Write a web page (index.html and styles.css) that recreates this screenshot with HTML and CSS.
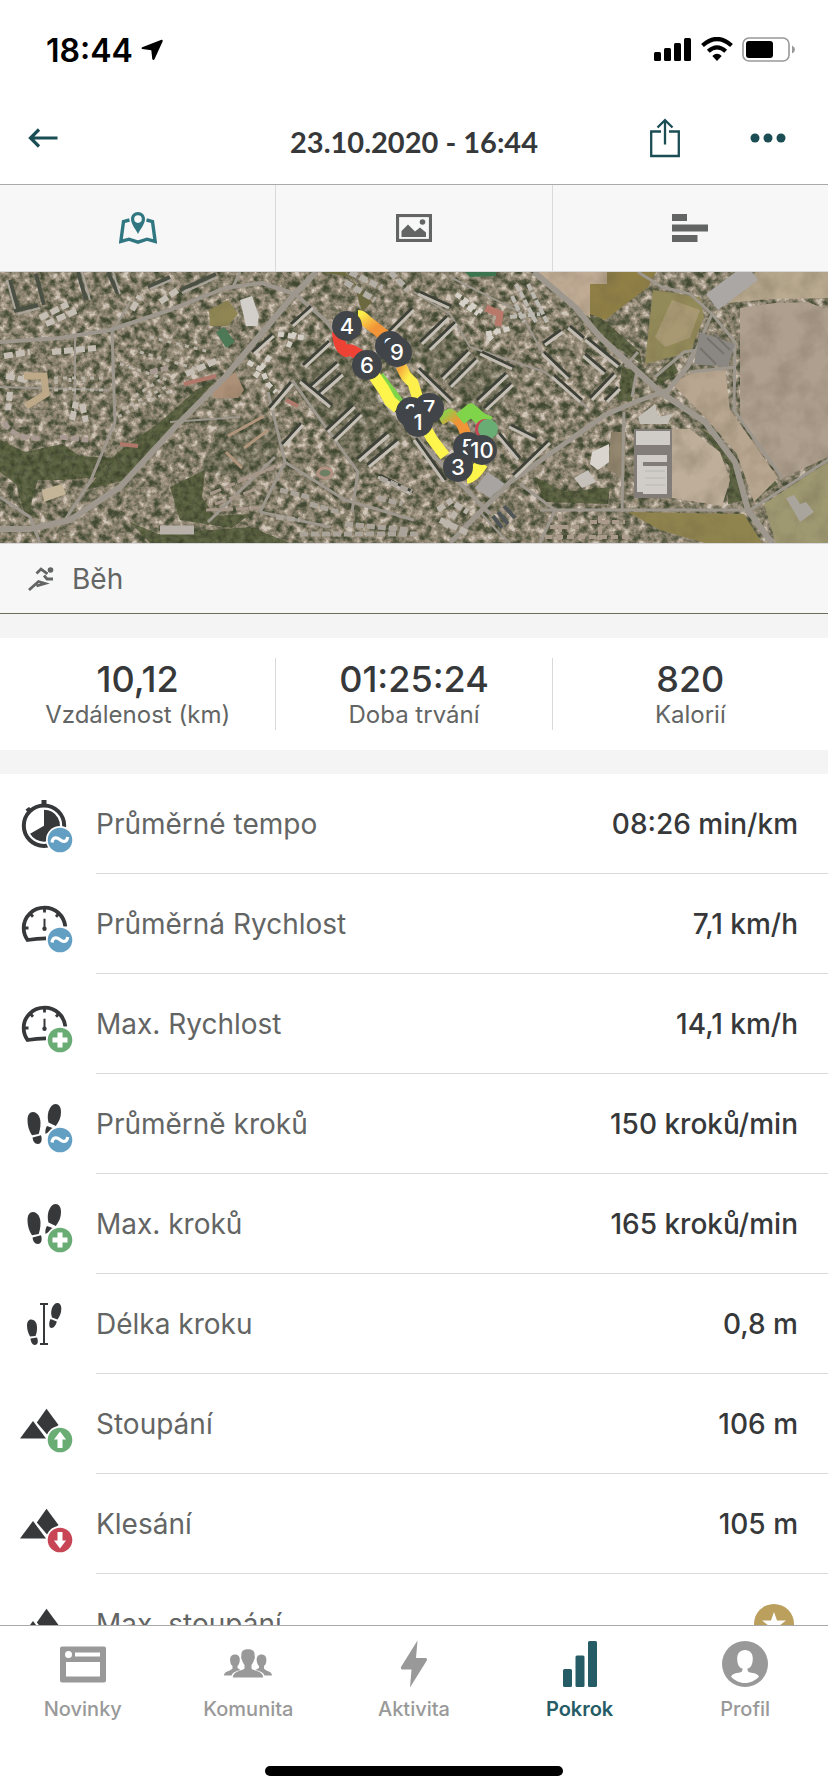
FILE: index.html
```html
<!DOCTYPE html>
<html lang="cs">
<head>
    <meta charset="utf-8" />
    <meta name="viewport" content="width=device-width, initial-scale=1">
    <title>Pokrok</title>
    <link rel="stylesheet" href="styles.css">
</head>
<body>
    <!-- shared icon parts -->
    <svg class="sprite" aria-hidden="true">
        <symbol id="badge-avg" viewBox="0 0 96 100">
            <circle cx="60" cy="66" r="14" fill="#fff" />
            <circle cx="60" cy="66" r="12.3" fill="#639fc3" />
            <path d="M52 68.5C52.500 63.500 56 62.500 59.800 65.500C63.500 68.500 67 68 67.700 63" fill="none" stroke="#fff" stroke-width="3.200" />
        </symbol>
        <symbol id="badge-max" viewBox="0 0 96 100">
            <circle cx="60" cy="66" r="14" fill="#fff" />
            <circle cx="60" cy="66" r="12.3" fill="#69ad75" />
            <path d="M60 58.500V73.500M52.500 66H67.500" stroke="#fff" stroke-width="5" />
        </symbol>
        <symbol id="badge-up" viewBox="0 0 96 100">
            <circle cx="60" cy="66" r="14" fill="#fff" />
            <circle cx="60" cy="66" r="12.3" fill="#69ad75" />
            <path d="M60 57.500L66 65.500H62.500V74H57.500V65.500H54Z" fill="#fff" />
        </symbol>
        <symbol id="badge-down" viewBox="0 0 96 100">
            <circle cx="60" cy="66" r="14" fill="#fff" />
            <circle cx="60" cy="66" r="12.3" fill="#c74554" />
            <path d="M60 74.500L66 66.500H62.500V58H57.500V66.500H54Z" fill="#fff" />
        </symbol>
        <symbol id="gauge" viewBox="0 0 96 100">
            <path d="M46 64.300C39 64.300 33 65 27.600 66C25 62.500 23.700 58.500 23.700 54C23.700 42.500 33 33.700 44.500 33.700C55.500 33.700 64 41.500 65.300 52.500" fill="none" stroke="#36383a" stroke-width="3.800" />
            <path d="M44.500 34V38.500M24 54H28.500M30.500 40L33 42.800M58.500 40L56 42.800" stroke="#36383a" stroke-width="2.800" />
            <path d="M44.500 44.700V54" stroke="#36383a" stroke-width="2" />
            <circle cx="44.500" cy="54.700" r="2.200" fill="#36383a" />
        </symbol>
        <symbol id="steps" viewBox="0 0 96 100">
            <path d="M33 38C37.500 38 40.500 43 40.500 49C40.500 53 39.700 57 38.700 60L32 61.300C29 57 27.500 52 27.500 46C27.500 41 29.500 38 33 38Z" fill="#36383a" />
            <path d="M32.600 63.500L41 61.300C42.500 65.500 41.500 70 37.800 70C34.500 70 32.800 67 32.600 63.500Z" fill="#36383a" />
            <path d="M55.500 30C59 30 61 33 61 38.500C61 43 59 48 55.800 52L48.500 48.500C47.500 45 47.500 41 48.500 37.500C50 33 52.500 30 55.500 30Z" fill="#36383a" />
            <path d="M47 52L54 54.500L45.500 60C45 57 45.500 54 47 52Z" fill="#36383a" />
        </symbol>
        <symbol id="mountain" viewBox="0 0 96 100">
            <path d="M46.500 34.700L58.500 51L47.500 61L36.800 48.500Z" fill="#36383a" />
            <path d="M33 47L46 64.500H20Z" fill="#36383a" />
        </symbol>
    </svg>

    <div class="screen">
        <header class="header">
            <div class="status">
                <div class="status-left">
                    <span class="clock">18:44</span>
                    <svg width="22" height="22" viewBox="0 0 22 22"><path d="M20.500 .8L1.200 8.200Q-.3 9.200 1.300 10L10.300 11.200L11.300 20.200Q12.500 21.800 13.500 20.200L21.700 2.200Q21.800 .5 20.500 .8Z" /></svg>
                </div>
                <div class="status-right">
                    <svg width="38" height="26" viewBox="0 0 38 26">
                        <rect x="0" y="15" width="7" height="9" rx="1.500" />
                        <rect x="10" y="11" width="7" height="13" rx="1.500" />
                        <rect x="20" y="6" width="7" height="18" rx="1.500" />
                        <rect x="30" y="1" width="7" height="23" rx="1.500" />
                    </svg>
                    <svg width="32" height="26" viewBox="0 0 32 26">
                        <path d="M1.500 8.500Q16-4.500 30.500 8.500M7.300 14.300Q16 6.500 24.700 14.300" fill="none" stroke="#000" stroke-width="4.200" />
                        <path d="M11.300 19Q16 14.500 20.700 19L16 24Z" />
                    </svg>
                    <svg width="54" height="26" viewBox="0 0 54 26">
                        <rect x="1" y="1" width="46" height="23" rx="6" fill="none" stroke="#999" stroke-width="1.600" />
                        <rect x="4" y="4" width="27" height="17" rx="3" />
                        <path d="M50 8.500Q53 10 53 12.500Q53 15 50 16.500Z" fill="#999" />
                    </svg>
                </div>
            </div>
            <div class="toolbar">
                <div class="toolbar-side">
                    <button type="button" class="icon-btn" aria-label="Zpět">
                        <svg width="30" height="20" viewBox="0 0 30 20"><path d="M29.500 10H2M11 1.500L2.500 10L11 18.500" fill="none" stroke="#1b4d55" stroke-width="3.200" /></svg>
                    </button>
                </div>
                <h1 class="toolbar-title">23.10.2020 - 16:44</h1>
                <div class="toolbar-side toolbar-right">
                    <button type="button" class="icon-btn" aria-label="Sdílet">
                        <svg width="30" height="40" viewBox="0 0 30 40"><path d="M11 13.500H1.200V38H28.800V13.500H19M15 26.500V3M7.500 9.500L15 2.200L22.500 9.500" fill="none" stroke="#1b4d55" stroke-width="2.300" /></svg>
                    </button>
                    <button type="button" class="icon-btn" aria-label="Další">
                        <svg width="36" height="10" viewBox="0 0 36 10"><g fill="#1b4d55"><circle cx="5" cy="5" r="4.500" /><circle cx="18" cy="5" r="4.500" /><circle cx="31" cy="5" r="4.500" /></g></svg>
                    </button>
                </div>
            </div>
        </header>

        <main class="content">
            <div class="views">
                <button type="button" class="view" aria-label="Mapa">
                    <svg width="38" height="34" viewBox="0 0 38 34">
                        <path d="M10.500 9L4.500 10.500L1.800 30.500L10 28.200L19 31.200L28 28.200L36.200 30.500L33.500 10.500L27.500 9" fill="none" stroke="#317782" stroke-width="3.400" />
                        <path d="M19 1C23 1 26 4 26 8C26 13 22 17 19 23C16 17 12 13 12 8C12 4 15 1 19 1ZM19 4.300A3.800 3.800 0 1 0 19 11.900A3.800 3.800 0 1 0 19 4.300Z" fill="#317782" fill-rule="evenodd" />
                    </svg>
                </button>
                <button type="button" class="view" aria-label="Fotky">
                    <svg width="36" height="28" viewBox="0 0 36 28">
                        <rect x="1.500" y="1.500" width="33" height="25" fill="none" stroke="#636564" stroke-width="3.200" />
                        <path d="M5.500 23V17L12 10.500L19 17.500L24 13.500L30 18.500V23Z" fill="#636564" />
                        <circle cx="26.500" cy="8" r="2.800" fill="#636564" />
                    </svg>
                </button>
                <button type="button" class="view" aria-label="Mezičasy">
                    <svg width="36" height="28" viewBox="0 0 36 28"><path d="M0 0H15V7H0ZM0 10.500H36V17.500H0ZM0 21H25.500V28H0Z" fill="#636564" /></svg>
                </button>
            </div>

            <svg class="map" viewBox="0 0 828 271" preserveAspectRatio="xMidYMid slice" role="img" aria-label="Trasa">
                <defs>
                    <filter id="town" x="0" y="0" width="100%" height="100%" color-interpolation-filters="sRGB">
                        <feTurbulence type="fractalNoise" baseFrequency="0.13" numOctaves="5" seed="7" />
                        <feColorMatrix values="1.900 0 0 0 -0.450  1.900 0 0 0 -0.450  1.900 0 0 0 -0.450  0 0 0 0 1" />
                        <feComponentTransfer>
                            <feFuncR type="table" tableValues="0.260 0.370 0.530 0.650 0.820" />
                            <feFuncG type="table" tableValues="0.290 0.380 0.500 0.600 0.780" />
                            <feFuncB type="table" tableValues="0.200 0.290 0.420 0.530 0.730" />
                        </feComponentTransfer>
                    </filter>
                    <filter id="grain" x="0" y="0" width="100%" height="100%" color-interpolation-filters="sRGB">
                        <feTurbulence type="fractalNoise" baseFrequency="0.180" numOctaves="4" seed="3" result="n" />
                        <feColorMatrix in="n" values="0 0 0 0 0.180  0 0 0 0 0.210  0 0 0 0 0.130  1.800 0 0 0 -0.700" result="dark" />
                        <feComposite in="dark" in2="SourceGraphic" operator="in" result="d" />
                        <feMerge><feMergeNode in="SourceGraphic" /><feMergeNode in="d" /></feMerge>
                    </filter>
                    <filter id="soil" x="0" y="0" width="100%" height="100%" color-interpolation-filters="sRGB">
                        <feTurbulence type="fractalNoise" baseFrequency="0.040" numOctaves="4" seed="9" result="n" />
                        <feColorMatrix in="n" values="0 0 0 0 0.400  0 0 0 0 0.350  0 0 0 0 0.270  0.600 0 0 0 -0.240" result="dark" />
                        <feComposite in="dark" in2="SourceGraphic" operator="in" result="d" />
                        <feMerge><feMergeNode in="SourceGraphic" /><feMergeNode in="d" /></feMerge>
                    </filter>
                    <linearGradient id="warm" x1="0" y1="0" x2="1" y2="1"><stop offset="0" stop-color="#fdf04c" /><stop offset="0.550" stop-color="#f29438" /><stop offset="1" stop-color="#f29438" /></linearGradient>
                    <linearGradient id="turn" x1="0" y1="0" x2="1" y2="1"><stop offset="0" stop-color="#84d64c" /><stop offset="0.500" stop-color="#ee9538" /><stop offset="1" stop-color="#f29438" /></linearGradient>
                    <linearGradient id="cool" x1="0" y1="0" x2="1" y2="1"><stop offset="0" stop-color="#f5a83c" /><stop offset="0.400" stop-color="#fdf04c" /><stop offset="1" stop-color="#fdf04c" /></linearGradient>
                    <path id="slabs" d="M305 95L331 71M311 117L339 92M318 125L343 103M328 160L355 135M335 169L362 143M359 189L389 163M369 195L399 170M390 62L414 38M422 72L449 46M430 78L457 52M443 107L470 80M451 115L478 88M479 130L508 103M486 138L513 113M515 205L550 171M592 128L616 103M607 130L620 117M284 174L303 153M271 138L293 112M254 82L274 64M293 54L313 36M545 73L563 60" />
                    <path id="rows" d="M418 22L449 36M480 82L512 97M542 82L568 107M552 105L580 130M568 56L582 68M583 84L604 102M585 68L618 95M417 98L451 131M509 155L535 168M414 168L444 210M378 205L411 222M384 130L408 156M300 110L330 135M497 163L518 188" />
                </defs>

                <rect width="828" height="271" filter="url(#town)" />

                <!-- woods -->
                <g fill="#565f3c" filter="url(#grain)" opacity="0.850">
                    <path d="M86 218L118 180L160 150L196 118L216 108L176 152L125 208Z" />
                    <path d="M0 168L25 180L62 172L80 184L112 186L98 205L62 208L38 208L30 235L40 247L24 240L16 212L0 200Z" />
                    <path d="M170 215L205 198L202 225L215 244L250 242L232 256L180 248Z" />
                    <path d="M130 250L158 262L250 255L290 271H150Z" />
                    <path d="M535 205L565 220L610 215L608 232L545 230Z" />
                    <path d="M600 45L640 80L642 92L612 72L585 46Z" />
                    <path d="M622 96L636 98L632 130L618 128Z" />
                    <path d="M655 103L672 86L678 100L660 113Z" />
                    <path d="M700 156L722 170L740 205L745 228L728 232L730 195Z" />
                    <path d="M758 202L770 204L778 212L756 226Z" />
                </g>
                <g fill="#39432c" opacity="0.250">
                    <path d="M300 60L345 85L410 165L355 198L290 110Z" />
                    <path d="M430 55L480 85L520 110L490 150L440 110L395 66Z" />
                    <path d="M220 150L280 150L275 205L200 200Z" />
                </g>

                <!-- fields -->
                <g filter="url(#soil)">
                    <path d="M740 36L775 31L808 30L828 38V185L783 206L760 180L740 145Z" fill="#ae9f8e" />
                    <path d="M728 31L770 27L828 26V0H756Z" fill="#b9aa90" />
                    <path d="M537 0H607V12H590V46L574 32Z" fill="#c0ac95" />
                    <path d="M607 0H656L648 15L605 48L590 42V12H607Z" fill="#908046" />
                    <path d="M653 18L700 25L704 45L690 80L645 92Z" fill="#938a59" />
                    <path d="M672 28L700 38L690 66L665 75L655 65Z" fill="#a89973" />
                    <path d="M672 112L697 98L725 96L730 138L778 206L754 230L737 182L705 145Z" fill="#b8a690" />
                    <path d="M672 157L690 157L720 180L730 208L722 234L672 226Z" fill="#bfaf9a" />
                    <path d="M628 240L744 242L762 271H705L660 258Z" fill="#90844e" />
                    <path d="M764 232L800 208L828 190V271H776Z" fill="#9f9972" />
                    <path d="M611 160H626L624 205L608 198Z" fill="#938770" />
                    <path d="M212 120L235 100L244 118L238 126L214 126Z" fill="#ac9077" />
                    <path d="M209 38L228 28L238 42L228 54L210 54Z" fill="#8f8654" />
                    <path d="M352 5L320 0H345L372 30L362 40Z" fill="#6d6b41" />
                </g>
                <path d="M216 60L224 55L235 70L226 76Z" fill="#4e7957" />
                <path d="M465 0H496V4L470 5Z" fill="#3c7450" />

                <!-- streets -->
                <g fill="none" stroke="#9d978e" stroke-linejoin="round">
                    <path d="M316 0L292 25L225 105L175 155L120 215L70 248L30 257H0" stroke-width="6" />
                    <path d="M0 70L60 66L110 58L170 38L225 16L262 11L295 22L325 48L355 85L420 170L490 242" stroke-width="4" />
                    <path d="M534 0L575 35L600 65L660 120L705 150L735 190L748 238L772 271" stroke-width="6" />
                    <path d="M450 271L480 240L510 210L605 143L635 130L668 118L688 94L695 78" stroke-width="5" />
                    <path d="M625 95L638 80M637 98L632 125M624 140L622 240M540 238L750 238L828 188" stroke-width="3" />
                    <path d="M638 0L662 15L690 22L712 42L735 70L734 138L782 206M712 42L696 78L684 80L655 105M690 100L735 95" stroke-width="3" />
                    <path d="M112 60L115 150L90 210L65 248M268 120L285 190L260 240M285 190L345 228L414 248M292 108L358 200L352 240M260 240L330 255M240 0L233 15" stroke-width="3" />
                    <path d="M414 20L450 42L470 75L545 100L590 138M450 5L520 40L545 85M480 240L500 262L510 271M170 150L240 145M75 65V140M0 115L110 118M130 30L112 60" stroke-width="2" />
                    <path d="M208 250L275 185M0 225L30 245L40 271M520 212L555 238L540 271" stroke-width="3" />
                </g>
                <path d="M712 30L752 0" stroke="#aaa7a4" stroke-width="20" />
                <path d="M700 60L735 72L728 95L694 92Z" fill="#8b8883" />
                <path d="M707 66L724 82M700 76L716 92M714 62L730 78" stroke="#76726c" stroke-width="2" />

                <!-- blocks of flats -->
                <g fill="none">
                    <use href="#slabs" x="-2" y="-2" stroke="#3d4138" stroke-width="3" />
                    <use href="#slabs" stroke="#c6c0b7" stroke-width="3" />
                    <use href="#rows" x="2" y="-2" stroke="#3d4138" stroke-width="3" />
                    <use href="#rows" stroke="#c1bbb2" stroke-width="3" />
                    <path d="M10 8L18 37M36 2L44 33M78 0L86 28M108 0L118 22M14 39L38 33M180 18L216 2M148 15L170 5" stroke="#4b5044" stroke-width="4" />
                    <path d="M7 8L15 37M82 0L90 28M113 0L120 22M18 42L40 36M182 21L218 5M150 17L171 8" stroke="#a9a49c" stroke-width="2" />
                    <path d="M46 52L78 38M40 46L68 32M4 84L30 80M52 80L96 76M6 104L26 108M72 148L76 130M82 132L86 150M186 102L218 88M10 120L8 138M132 38L140 24M160 30L178 18" stroke="#c5beb4" stroke-width="6" stroke-dasharray="9 3" />
                    <path d="M4 150Q14 168 42 166M60 165L88 168M150 100L168 96" stroke="#a89a92" stroke-width="5" stroke-dasharray="8 3" />
                    <path d="M24 104L44 104L46 122L26 134" stroke="#bda888" stroke-width="7" />
                    <path d="M118 145L172 118M122 137L170 113M135 124L160 108M150 65L210 80M140 80L200 98M120 92L180 112M54 106H108M54 118H108M56 108V118M70 106V118M84 106V118" stroke="#b9b2a6" stroke-width="3" stroke-dasharray="4 5" />
                    <path d="M210 222L280 192M215 232L262 215M206 238L260 236M240 208L274 196" stroke="#a7978b" stroke-width="3" stroke-dasharray="12 3" />
                    <path d="M228 164L264 144M244 176L268 158M226 180L242 196" stroke="#b1957c" stroke-width="3" />
                    <path d="M184 112L216 104M120 172L138 174M286 128L298 134" stroke="#b0786a" stroke-width="4" />
                    <path d="M248 90L262 98L268 112L276 120M255 105L270 84M278 62L305 66M288 75L296 58" stroke="#d2cdc5" stroke-width="5" stroke-dasharray="6 4" />
                    <path d="M345 10L375 28M350 0L382 16M390 0L408 18" stroke="#b3aea6" stroke-width="6" stroke-dasharray="8 3" />
                    <path d="M516 12L536 50M528 12L548 52M510 45L540 42M512 24L524 50" stroke="#bcb8b2" stroke-width="4" stroke-dasharray="7 2" />
                    <path d="M456 22L482 40M460 30L478 42M486 62L512 56M488 68L500 56" stroke="#d5d0c8" stroke-width="5" stroke-dasharray="6 3" />
                    <path d="M486 36L500 42L498 54" stroke="#b9796a" stroke-width="7" />
                    <path d="M438 238L452 228M445 255L456 240M440 248L470 262M455 232L468 240" stroke="#bbb5ac" stroke-width="6" stroke-dasharray="8 3" />
                    <path d="M498 240L508 252M504 234L515 246M493 244L502 256" stroke="#4f5456" stroke-width="4" />
                    <path d="M550 255H580M590 250H625M545 265H630M560 242V268M600 244V268" stroke="#a99a8c" stroke-width="4" stroke-dasharray="7 4" />
                    <path d="M276 245L300 248M280 218L312 226M310 232L338 240M380 206L412 220M378 226L402 232M300 262L420 262M345 252L410 258" stroke="#aaa39a" stroke-width="5" stroke-dasharray="8 3" />
                    <path d="M160 258H194" stroke="#b8b1a9" stroke-width="9" />
                </g>
                <path d="M240 28L252 24L259 44L257 54L246 54Z" fill="#d2cfca" />
                <path d="M42 218L62 212L66 222L44 230Z" fill="#c5b598" />
                <ellipse cx="325" cy="201" rx="7" ry="5" fill="#6d8064" stroke="#b39182" stroke-width="3" />
                <path d="M475 216L488 200L505 212L490 226Z" fill="#a7a4a1" />
                <path d="M592 180L609 172V190L598 198L590 192Z" fill="#d9d5ce" />
                <path d="M574 206L588 198L596 210L582 216Z" fill="#c6c2bb" />
                <path d="M638 145L655 132L658 145L672 142L668 152H640Z" fill="#c3bfb7" />
                <path d="M634 157H672V226H634Z" fill="#827d78" />
                <path d="M636 159H670V173H636ZM637 183H667V190H643V220H637ZM643 194H667V222H643Z" fill="#d0cdc8" />
                <path d="M645 199H665M645 206H665M645 213H665" stroke="#b9b7b3" />
                <path d="M786 226L794 223L800 232L806 230L814 240L800 250Z" fill="#a9a59c" />

                <!-- route -->
                <g fill="none" stroke-width="11" stroke-linejoin="round">
                    <path d="M379 104L400 132" stroke="#80d44a" stroke-width="10" />
                    <path d="M373 102L384 118L390 129L398 136" stroke="#fdf44c" stroke-width="12" />
                    <path d="M338 60Q339 76 346 79Q352 76 361 85" stroke="#ee4235" stroke-width="12" />
                    <path d="M358 44Q362 44 366 49L388 66" stroke="url(#warm)" stroke-width="12" />
                    <path d="M401 94L406 104L413 111L418 127" stroke="url(#cool)" />
                    <path d="M427 158L432 167L445 184" stroke="#fdf44c" />
                    <path d="M440 148L450 142L458 148Q463 152 466 164" stroke="url(#turn)" />
                    <path d="M460 147L471 138L481 147L490 151" stroke="#80d44a" stroke-width="13" />
                    <path d="M467 205Q473 205 482 191" stroke="#fdf44c" stroke-width="13" />
                </g>
                <circle cx="485" cy="157" r="10" fill="#c74554" />
                <circle cx="488" cy="157" r="10" fill="#69ad75" />
                <g class="km">
                    <circle cx="347" cy="54" r="15" /><text x="347" y="62">4</text>
                    <circle cx="390" cy="74" r="15" /><text x="390" y="82">8</text>
                    <circle cx="397" cy="80" r="15" /><text x="397" y="88">9</text>
                    <circle cx="367" cy="93" r="15" /><text x="367" y="101">6</text>
                    <circle cx="411" cy="140" r="15" /><text x="411" y="148">2</text>
                    <circle cx="429" cy="136" r="15" /><text x="429" y="144">7</text>
                    <circle cx="418" cy="150" r="15" /><text x="418" y="158">1</text>
                    <circle cx="468" cy="175" r="15" /><text x="468" y="183">5</text>
                    <circle cx="482" cy="178" r="15" /><text x="482" y="186">10</text>
                    <circle cx="458" cy="195" r="15" /><text x="458" y="203">3</text>
                </g>
            </svg>

            <div class="sport">
                <svg width="26" height="26" viewBox="0 0 26 26">
                    <path d="M8.500 7.500L13 3L19.500 7.800M16 9.500L19 13H25M1 24L10.500 15.500L17 17.500L8.500 20" fill="none" stroke="#636564" stroke-width="2.800" />
                    <circle cx="22.500" cy="4" r="2.800" fill="#636564" />
                </svg>
                <span>Běh</span>
            </div>

            <div class="summary">
                <div class="summary-item">
                    <span class="summary-value">10,12</span>
                    <span class="summary-label">Vzdálenost (km)</span>
                </div>
                <div class="summary-item">
                    <span class="summary-value">01:25:24</span>
                    <span class="summary-label">Doba trvání</span>
                </div>
                <div class="summary-item">
                    <span class="summary-value">820</span>
                    <span class="summary-label">Kalorií</span>
                </div>
            </div>

            <ul class="details">
                <li class="detail">
                    <svg class="detail-icon" viewBox="0 0 96 100">
                        <circle cx="44" cy="51.700" r="20.200" fill="none" stroke="#36383a" stroke-width="4" />
                        <path d="M41.500 26H46.500V32H41.500ZM25.500 35.500L29 33L32.500 36L28.500 39.500Z" fill="#36383a" />
                        <path d="M44 51.700V35.700A16 16 0 1 1 30.100 59.700Z" fill="#36383a" />
                        <use href="#badge-avg" width="96" height="100" />
                    </svg>
                    <div class="detail-body"><span class="detail-label">Průměrné tempo</span><span class="detail-value">08:26 min/km</span></div>
                </li>
                <li class="detail">
                    <svg class="detail-icon" viewBox="0 0 96 100"><use href="#gauge" width="96" height="100" /><use href="#badge-avg" width="96" height="100" /></svg>
                    <div class="detail-body"><span class="detail-label">Průměrná Rychlost</span><span class="detail-value">7,1 km/h</span></div>
                </li>
                <li class="detail">
                    <svg class="detail-icon" viewBox="0 0 96 100"><use href="#gauge" width="96" height="100" /><use href="#badge-max" width="96" height="100" /></svg>
                    <div class="detail-body"><span class="detail-label">Max. Rychlost</span><span class="detail-value">14,1 km/h</span></div>
                </li>
                <li class="detail">
                    <svg class="detail-icon" viewBox="0 0 96 100"><use href="#steps" width="96" height="100" /><use href="#badge-avg" width="96" height="100" /></svg>
                    <div class="detail-body"><span class="detail-label">Průměrně kroků</span><span class="detail-value">150 kroků/min</span></div>
                </li>
                <li class="detail">
                    <svg class="detail-icon" viewBox="0 0 96 100"><use href="#steps" width="96" height="100" /><use href="#badge-max" width="96" height="100" /></svg>
                    <div class="detail-body"><span class="detail-label">Max. kroků</span><span class="detail-value">165 kroků/min</span></div>
                </li>
                <li class="detail">
                    <svg class="detail-icon" viewBox="0 0 96 100">
                        <path d="M31 45.500C35 45.500 37 49 37 54C37 57 36.500 59.500 35.500 62L30 62.500C28 59 27 55 27 51.500C27 48 28.500 45.500 31 45.500Z" fill="#36383a" />
                        <path d="M30.500 64.500L37 63.500C38.500 67 38 71 34.800 71C32.200 71 30.800 68 30.500 64.500Z" fill="#36383a" />
                        <path d="M57.500 29C60 29 61.300 31.500 61.300 35C61.300 39 59.500 42.500 57.500 45.500L52 43.500C50.800 40 51 37 52 34C53.200 31 55 29 57.500 29Z" fill="#36383a" />
                        <path d="M50.500 45L56.800 47.500C56 51 54 54 51.500 54C48.800 54 48.500 49 50.500 45Z" fill="#36383a" />
                        <path d="M40 30H48M44 30V70M40 70H48" fill="none" stroke="#36383a" stroke-width="2" />
                    </svg>
                    <div class="detail-body"><span class="detail-label">Délka kroku</span><span class="detail-value">0,8 m</span></div>
                </li>
                <li class="detail">
                    <svg class="detail-icon" viewBox="0 0 96 100"><use href="#mountain" width="96" height="100" /><use href="#badge-up" width="96" height="100" /></svg>
                    <div class="detail-body"><span class="detail-label">Stoupání</span><span class="detail-value">106 m</span></div>
                </li>
                <li class="detail">
                    <svg class="detail-icon" viewBox="0 0 96 100"><use href="#mountain" width="96" height="100" /><use href="#badge-down" width="96" height="100" /></svg>
                    <div class="detail-body"><span class="detail-label">Klesání</span><span class="detail-value">105 m</span></div>
                </li>
                <li class="detail">
                    <svg class="detail-icon" viewBox="0 0 96 100"><use href="#mountain" width="96" height="100" /></svg>
                    <div class="detail-body">
                        <span class="detail-label">Max. stoupání</span>
                        <svg class="star" width="40" height="40" viewBox="0 0 40 40">
                            <circle cx="20" cy="20" r="20" fill="#bb9f5d" />
                            <path d="M20 8L23 16.500H32L25 22L27.500 31L20 25.500L12.500 31L15 22L8 16.500H17Z" fill="#fff" />
                        </svg>
                    </div>
                </li>
            </ul>
        </main>

        <footer class="footer">
            <nav class="tabs">
                <a href="#" class="tab">
                    <svg width="48" height="48" viewBox="0 0 48 48">
                        <path d="M3 6.500H45Q47 6.500 47 8.500V40.500Q47 42.500 45 42.500H3Q1 42.500 1 40.500V8.500Q1 6.500 3 6.500ZM7 22V36.500H41V22ZM16 12.500V16.500H41V12.500ZM9.500 11A3.500 3.500 0 1 0 9.500 18A3.500 3.500 0 1 0 9.500 11Z" fill="currentColor" fill-rule="evenodd" />
                    </svg>
                    Novinky
                </a>
                <a href="#" class="tab">
                    <svg width="48" height="48" viewBox="0 0 48 48" fill="currentColor">
                        <path d="M24 9.300C28.500 9.300 31 11 30.600 16C31.300 17 30.500 19.500 29.800 20.500C29.300 22.500 28 24 27.500 25V28.500C29 31 39 30.500 39.200 37.500H8.800C9 30.500 19 31 20.500 28.500V25C20 24 18.700 22.500 18.200 20.500C17.500 19.500 16.700 17 17.400 16C17 11 19.500 9.300 24 9.300Z" />
                        <path d="M11 14.500C14.500 14.500 16.300 17 15.700 21C15.500 23.500 14.500 25 13.500 26V28L16.500 30C12 31 8.500 32.500 7.500 35.500H0C0 31 7 31 8.500 28.500V26C7 25 6.300 23 6.200 21C5.600 17 7.500 14.500 11 14.500Z" />
                        <path d="M37.500 14.500C34 14.500 32.200 17 32.800 21C33 23.500 34 25 35 26V28L31.500 30C36 31 39.500 32.500 40.500 35.500H48C48 31 41 31 40 28.500V26C41.500 25 42.200 23 42.300 21C42.900 17 41 14.500 37.500 14.500Z" />
                    </svg>
                    Komunita
                </a>
                <a href="#" class="tab">
                    <svg width="48" height="48" viewBox="0 0 48 48"><path d="M27.500 .5L11 27Q10.500 29.500 12.500 29.500H21.500L20 47.500L36.800 20.500Q37.500 18 35.500 18H26Z" fill="currentColor" /></svg>
                    Aktivita
                </a>
                <a href="#" class="tab active">
                    <svg width="48" height="48" viewBox="0 0 48 48" fill="currentColor"><rect x="7" y="29" width="9" height="18" rx="1.500" /><rect x="19.500" y="15.500" width="9" height="31.500" rx="1.500" /><rect x="32" y="1" width="9" height="46" rx="1.500" /></svg>
                    Pokrok
                </a>
                <a href="#" class="tab">
                    <svg width="48" height="48" viewBox="0 0 48 48">
                        <circle cx="24" cy="24" r="23" fill="currentColor" />
                        <path d="M24 10C29 10 32 13.500 31.800 19C31.800 24 29.500 28.500 26.500 28.500Q26.200 32 29 32.500C33 33 37 34 38 36.500C34.500 40.500 29.500 43 24 43C18.500 43 13.500 40.500 10 36.500C11 34 15 33 19 32.500Q21.800 32 21.500 28.500C18.500 28.500 16.200 24 16.200 19C16 13.500 19 10 24 10Z" fill="#fff" />
                    </svg>
                    Profil
                </a>
            </nav>
            <div class="home-bar"></div>
        </footer>
    </div>
</body>
</html>
```

FILE: styles.css
```css
* {
    padding: 0;
    margin: 0;
    box-sizing: border-box;
}

body {
    font-family: Inter, "Liberation Sans", sans-serif;
    color: #36383a;
    background: #fff;
}

svg {
    display: block;
    flex-shrink: 0;
}

button {
    border: none;
    background: none;
    font: inherit;
    cursor: pointer;
}

.sprite {
    display: none;
}

.screen {
    height: 100vh;
    display: flex;
    flex-direction: column;
}

/* status bar and toolbar */
.header {
    border-bottom: 1px solid #a9a9a9;
}

.status {
    height: 92px;
    padding: 8px 32px 0 46px;
    display: flex;
    justify-content: space-between;
    align-items: center;
    color: #000;
}

.status-left {
    display: flex;
    align-items: center;
    gap: 8px;
}

.status-right {
    display: flex;
    align-items: center;
    gap: 9px;
}

.clock {
    font-size: 32px;
    font-weight: 600;
}

.toolbar {
    height: 92px;
    padding: 0 28px;
    display: flex;
    align-items: center;
}

.toolbar-side {
    flex: 1;
    padding-right: 14px;
    display: flex;
    align-items: center;
}

.toolbar-right {
    justify-content: flex-end;
    gap: 70px;
}

.toolbar-title {
    padding-top: 6px;
    font-family: Lato, "Liberation Sans", sans-serif;
    font-size: 29px;
    font-weight: 700;
}

/* map, photos, laps */
.views {
    display: flex;
    background: #f7f7f7;
    border-bottom: 1px solid #d9d9d9;
}

.view {
    flex: 1;
    height: 86px;
    display: flex;
    justify-content: center;
    align-items: center;
}

.view + .view {
    border-left: 1px solid #d9d9d9;
}

.content {
    flex: 1;
    min-height: 0;
    overflow: hidden;
    background: #f4f4f4;
}

.map {
    width: 100%;
    height: 271px;
}

.km circle {
    fill: #414549;
}

.km text {
    fill: #fff;
    font-size: 22px;
    font-weight: 500;
    text-anchor: middle;
}

.sport {
    height: 71px;
    padding-left: 28px;
    display: flex;
    align-items: center;
    gap: 18px;
    background: #f7f7f7;
    border-top: 1px solid #d9d9d9;
    border-bottom: 1px solid #6f6d5c;
    color: #636564;
    font-size: 28px;
}

/* totals */
.summary {
    margin: 24px 0;
    padding: 20px 0;
    display: flex;
    background: #fff;
}

.summary-item {
    flex: 1;
    display: flex;
    flex-direction: column;
    align-items: center;
}

.summary-item + .summary-item {
    border-left: 1px solid #d9d9d9;
}

.summary-value {
    font-size: 36px;
    font-weight: 500;
    line-height: 42px;
}

.summary-label {
    color: #636564;
    font-size: 24px;
    line-height: 30px;
}

/* list of measured values */
.details {
    list-style: none;
    background: #fff;
}

.detail {
    display: flex;
}

.detail-icon {
    width: 96px;
    height: 100px;
}

.detail-body {
    flex: 1;
    padding-right: 30px;
    display: flex;
    justify-content: space-between;
    align-items: center;
    border-bottom: 1px solid #d9d9d9;
    font-size: 28px;
}

.detail-label {
    color: #636564;
}

.detail-value {
    font-weight: 500;
}

.star {
    margin-right: 4px;
}

/* bottom navigation */
.footer {
    height: 167px;
    padding-bottom: 16px;
    display: flex;
    flex-direction: column;
    justify-content: space-between;
    align-items: center;
    background: #fff;
    border-top: 1px solid #a9a9a9;
}

.tabs {
    width: 100%;
    padding-top: 14px;
    display: flex;
}

.tab {
    flex: 1;
    display: flex;
    flex-direction: column;
    align-items: center;
    gap: 9px;
    color: #999;
    font-size: 20px;
    font-weight: 500;
    line-height: 24px;
    text-decoration: none;
}

.tab.active {
    color: #265c66;
    font-weight: 600;
}

.home-bar {
    width: 36%;
    height: 10px;
    border-radius: 5px;
    background: #000;
}
```
